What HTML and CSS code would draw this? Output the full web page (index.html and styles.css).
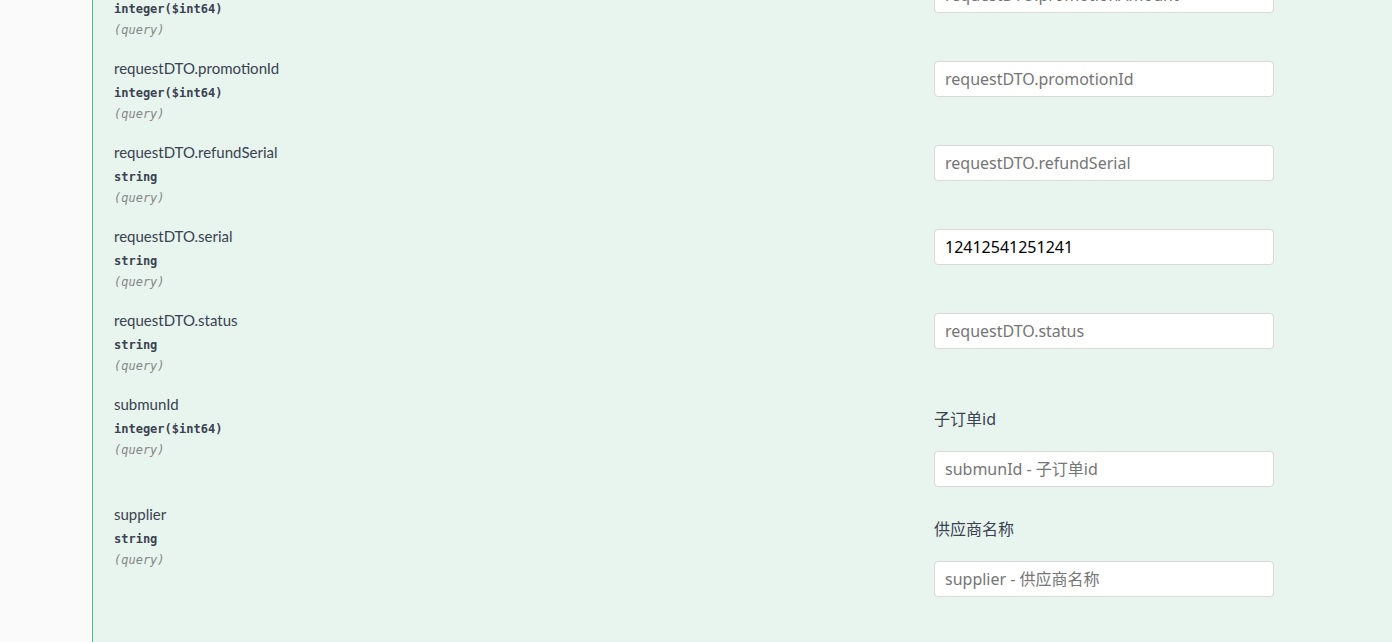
FILE: index.html
```html
<!DOCTYPE html>
<html lang="zh">
<head>
<meta charset="utf-8">
<title>Parameters</title>
<link rel="stylesheet" href="styles.css">
</head>
<body>
<div class="page">
  <aside class="side"></aside>
  <main class="block">
    <div class="params">
      <div class="row">
        <div class="name-col">
          <div class="pname">requestDTO.promotionAmount</div>
          <div class="ptype">integer($int64)</div>
          <div class="pin">(query)</div>
        </div>
        <div class="desc-col">
          <input class="field" type="text" placeholder="requestDTO.promotionAmount">
        </div>
      </div>
      <div class="row">
        <div class="name-col">
          <div class="pname">requestDTO.promotionId</div>
          <div class="ptype">integer($int64)</div>
          <div class="pin">(query)</div>
        </div>
        <div class="desc-col">
          <input class="field" type="text" placeholder="requestDTO.promotionId">
        </div>
      </div>
      <div class="row">
        <div class="name-col">
          <div class="pname">requestDTO.refundSerial</div>
          <div class="ptype">string</div>
          <div class="pin">(query)</div>
        </div>
        <div class="desc-col">
          <input class="field" type="text" placeholder="requestDTO.refundSerial">
        </div>
      </div>
      <div class="row">
        <div class="name-col">
          <div class="pname">requestDTO.serial</div>
          <div class="ptype">string</div>
          <div class="pin">(query)</div>
        </div>
        <div class="desc-col">
          <input class="field" type="text" placeholder="requestDTO.serial" value="12412541251241">
        </div>
      </div>
      <div class="row">
        <div class="name-col">
          <div class="pname">requestDTO.status</div>
          <div class="ptype">string</div>
          <div class="pin">(query)</div>
        </div>
        <div class="desc-col">
          <input class="field" type="text" placeholder="requestDTO.status">
        </div>
      </div>
      <div class="row">
        <div class="name-col">
          <div class="pname">submunId</div>
          <div class="ptype">integer($int64)</div>
          <div class="pin">(query)</div>
        </div>
        <div class="desc-col desc-labeled">
          <div class="plabel">子订单id</div>
          <input class="field field-labeled" type="text" placeholder="submunId - 子订单id">
        </div>
      </div>
      <div class="row">
        <div class="name-col">
          <div class="pname">supplier</div>
          <div class="ptype">string</div>
          <div class="pin">(query)</div>
        </div>
        <div class="desc-col desc-labeled">
          <div class="plabel">供应商名称</div>
          <input class="field field-labeled" type="text" placeholder="supplier - 供应商名称">
        </div>
      </div>
    </div>
  </main>
</div>
</body>
</html>
```

FILE: styles.css
```css
html, body {
  margin: 0;
  padding: 0;
  height: 100%;
  overflow: hidden;
}

body {
  background: #fafafa;
  font-family: Lato, "Noto Sans CJK SC", sans-serif;
  color: #3b4151;
}

.page {
  display: flex;
  min-height: 100vh;
}

.side {
  width: 92px;
  flex: 0 0 92px;
  background: #fafafa;
}

.block {
  flex: 1;
  background: #e7f5ee;
  border-left: 1px solid #45c486;
  padding-left: 21px;
  min-height: 100vh;
}

.params {
  margin-top: -37px;
  display: flex;
  flex-direction: column;
}

.row {
  display: grid;
  grid-template-columns: 820px 340px;
  align-items: start;
  padding-top: 10px;
}

.name-col {
  padding-bottom: 10px;
}

.pname {
  font-size: 15px;
  line-height: 22px;
  color: #3b4151;
}

.ptype {
  font-family: "DejaVu Sans Mono", monospace;
  font-size: 12px;
  font-weight: 600;
  line-height: 14px;
  padding: 7px 0 7px;
  color: #3b4151;
}

.pin {
  font-family: "DejaVu Sans Mono", monospace;
  font-size: 12px;
  font-style: italic;
  line-height: 14px;
  color: #868686;
}

.desc-col {
  display: flex;
  flex-direction: column;
}

.desc-labeled {
  padding-bottom: 6px;
}

.plabel {
  font-family: "Noto Sans", "Noto Sans CJK SC", sans-serif;
  font-size: 16px;
  line-height: 24px;
  margin-top: 14px;
  color: #3b4151;
}

.field {
  box-sizing: border-box;
  width: 340px;
  height: 36px;
  margin: 4px 0 0;
  padding: 0 10px;
  border: 1px solid #d9d9d9;
  border-radius: 4px;
  background: #fff;
  font-family: "Noto Sans", "Noto Sans CJK SC", sans-serif;
  font-size: 16px;
  color: #000;
  outline: none;
}

.field::placeholder {
  color: #757575;
  opacity: 1;
}

.field-labeled {
  margin-top: 20px;
}
```
